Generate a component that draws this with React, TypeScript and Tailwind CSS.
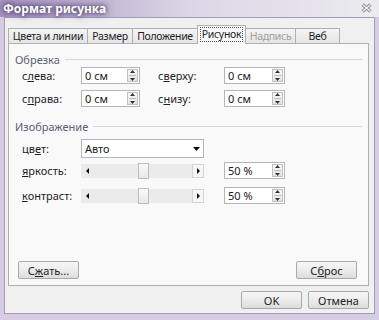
import React from "react";

const font = { fontFamily: '"Noto Sans", "Open Sans", sans-serif' };

function Spin({ value, w }: { value: string; w: string }) {
  return (
    <div className={`${w} h-[17px] bg-white border border-[#b4b6bc] flex items-center relative`}>
      <span className="pl-[3px] text-[11px] text-[#1a1a1a] leading-none">{value}</span>
      <div className="absolute right-[1px] top-[1px] bottom-[1px] w-[11px] border border-[#c0c0c0] bg-gradient-to-b from-[#f8f8f8] to-[#e4e4e4] flex flex-col items-center justify-center gap-[2px]">
        <svg width="5" height="3" viewBox="0 0 5 3"><path d="M0 3 L2.5 0 L5 3 Z" fill="#333" /></svg>
        <div className="w-[7px] h-px bg-[#bbb]" />
        <svg width="5" height="3" viewBox="0 0 5 3"><path d="M0 0 L2.5 3 L5 0 Z" fill="#333" /></svg>
      </div>
    </div>
  );
}

function Slider() {
  return (
    <div className="w-[123px] h-[14px] flex items-stretch relative bg-[#ebebeb]">
      <div className="w-[12px] flex items-center justify-center">
        <svg width="3" height="6" viewBox="0 0 3 6"><path d="M3 0 L0 3 L3 6 Z" fill="#111" /></svg>
      </div>
      <div className="flex-1 relative">
        <div className="absolute left-[45px] top-[-1px] bottom-[-1px] w-[11px] border border-[#bdbdbd] bg-gradient-to-b from-[#fafafa] to-[#e8e8e8] flex items-center justify-center">
          <div className="w-[5px] h-[5px] bg-[radial-gradient(#8a8a8a_0.6px,transparent_0.7px)] bg-[length:2px_2px]" />
        </div>
      </div>
      <div className="w-[12px] border border-[#d4d4d4] bg-[#f6f6f6] flex items-center justify-center">
        <svg width="3" height="6" viewBox="0 0 3 6"><path d="M0 0 L3 3 L0 6 Z" fill="#111" /></svg>
      </div>
    </div>
  );
}

function Btn({ children, w = "w-[61px]" }: { children: React.ReactNode; w?: string }) {
  return (
    <div className={`${w} h-[18px] rounded-[2px] border border-[#a9a9a9] bg-gradient-to-b from-[#f6f6f6] via-[#ececec] to-[#dcdcdc] flex items-center justify-center text-[11px] text-[#222] leading-none`}>
      {children}
    </div>
  );
}

function Group({ title }: { title: string }) {
  return (
    <div className="flex items-center h-[14px] pl-[6px] pr-[6px]">
      <span className="text-[11px] text-[#5c6270] leading-none">{title}</span>
      <div className="flex-1 h-px bg-[#d5d5d5] ml-[5px]" />
    </div>
  );
}

function Lbl({ pre, u, post, w }: { pre: string; u: string; post: string; w: string }) {
  return (
    <span className={`${w} text-[11px] text-[#1e1e1e] leading-none`}>
      {pre}
      <u className="underline underline-offset-[1px]">{u}</u>
      {post}
    </span>
  );
}

export default function App() {
  const tab =
    "h-[15px] border border-b-0 border-[#b0b0b0] bg-gradient-to-b from-[#f4f4f4] to-[#e6e6e6] text-[10.5px] tracking-[-0.3px] whitespace-nowrap leading-none flex items-center justify-center mt-[3px] -ml-px first:ml-0";
  return (
    <div style={font} className="w-[379px] h-[320px] bg-[#d6cde2] flex flex-col overflow-hidden">
      {/* title bar */}
      <div className="h-[17px] flex items-center bg-gradient-to-r from-[#a896c0] via-[#dcd6e6] to-[#ecebf0] relative">
        <span className="pl-[3px] text-[12px] font-bold text-white leading-none [text-shadow:0_0_4px_#3e2f60,0_0_8px_#4a3a6e]">
          Формат рисунка
        </span>
        <div className="absolute right-[7px] top-[3px]">
          <svg width="11" height="10" viewBox="0 0 11 10">
            <path d="M1.5 1.5 L9.5 8.5 M9.5 1.5 L1.5 8.5" stroke="#8a8a8a" strokeWidth="3" />
            <path d="M1.5 1.5 L9.5 8.5 M9.5 1.5 L1.5 8.5" stroke="#f4f4f4" strokeWidth="1.2" />
          </svg>
        </div>
      </div>
      <div className="flex-1 flex px-[4px] pb-[6px]">
        <div className="flex-1 bg-[#f0f0f0] border border-[#a49bb4] flex flex-col pl-[3px] pr-[5px] pt-[7px]">
          {/* tabs */}
          <div className="flex items-end h-[18px] pl-[0px]">
            <div className={`${tab} w-[80px] text-[#1e1e1e]`}>Цвета и линии</div>
            <div className={`${tab} w-[46px] text-[#1e1e1e]`}>Размер</div>
            <div className={`${tab} w-[66px] text-[#1e1e1e]`}>Положение</div>
            <div className="h-[19px] w-[49px] -ml-px border border-b-0 border-[#b0b0b0] bg-[#f9f9f9] flex items-center justify-center relative z-10 -mb-px pb-px">
              <span className="text-[10.5px] tracking-[-0.3px] whitespace-nowrap leading-none text-[#1e1e1e] border border-dotted border-[#555] px-[1px] py-[1px]">Рисунок</span>
            </div>
            <div className={`${tab} w-[51px] text-[#a0a0a0]`}>Надпись</div>
            <div className={`${tab} w-[45px] text-[#1e1e1e]`}>Веб</div>
          </div>
          {/* panel */}
          <div className="h-[243px] border border-[#b0b0b0] bg-[#f9f9f9] flex flex-col">
            <div className="mt-[8px]">
              <Group title="Обрезка" />
            </div>
            <div className="mt-[1px] flex items-center pl-[13px]">
              <Lbl pre="с" u="л" post="ева:" w="w-[59px]" />
              <Spin value="0 см" w="w-[59px]" />
              <span className="w-[18px]" />
              <Lbl pre="с" u="в" post="ерху:" w="w-[66px]" />
              <Spin value="0 см" w="w-[61px]" />
            </div>
            <div className="mt-[6px] flex items-center pl-[13px]">
              <Lbl pre="с" u="п" post="рава:" w="w-[59px]" />
              <Spin value="0 см" w="w-[59px]" />
              <span className="w-[18px]" />
              <Lbl pre="с" u="н" post="изу:" w="w-[66px]" />
              <Spin value="0 см" w="w-[61px]" />
            </div>
            <div className="mt-[12px]">
              <Group title="Изображение" />
            </div>
            <div className="mt-[6px] flex items-center pl-[13px]">
              <Lbl pre="цв" u="е" post="т:" w="w-[59px]" />
              <div className="w-[123px] h-[19px] bg-white border border-[#b4b6bc] flex items-center">
                <span className="flex-1 pl-[3px] text-[11px] leading-none text-[#1a1a1a]">Авто</span>
                <div className="w-[13px] h-full flex items-center justify-center">
                  <svg width="7" height="4" viewBox="0 0 7 4"><path d="M0 0 L7 0 L3.5 4 Z" fill="#111" /></svg>
                </div>
              </div>
            </div>
            <div className="mt-[4px] flex items-center pl-[13px]">
              <Lbl pre="" u="я" post="ркость:" w="w-[59px]" />
              <Slider />
              <span className="w-[20px]" />
              <Spin value="50 %" w="w-[61px]" />
            </div>
            <div className="mt-[8px] flex items-center pl-[13px]">
              <Lbl pre="" u="к" post="онтраст:" w="w-[59px]" />
              <Slider />
              <span className="w-[20px]" />
              <Spin value="50 %" w="w-[61px]" />
            </div>
            <div className="flex-1" />
            <div className="flex justify-between pl-[9px] pr-[11px] mb-[6px]">
              <Btn>
                С<u className="underline underline-offset-[1px]">ж</u>ать...
              </Btn>
              <Btn>
                С<u className="underline underline-offset-[1px]">б</u>рос
              </Btn>
            </div>
          </div>
          <div className="flex justify-end gap-[6px] mt-[5px]">
            <Btn w="w-[61px]">OK</Btn>
            <Btn w="w-[61px]">Отмена</Btn>
          </div>
        </div>
      </div>
    </div>
  );
}
